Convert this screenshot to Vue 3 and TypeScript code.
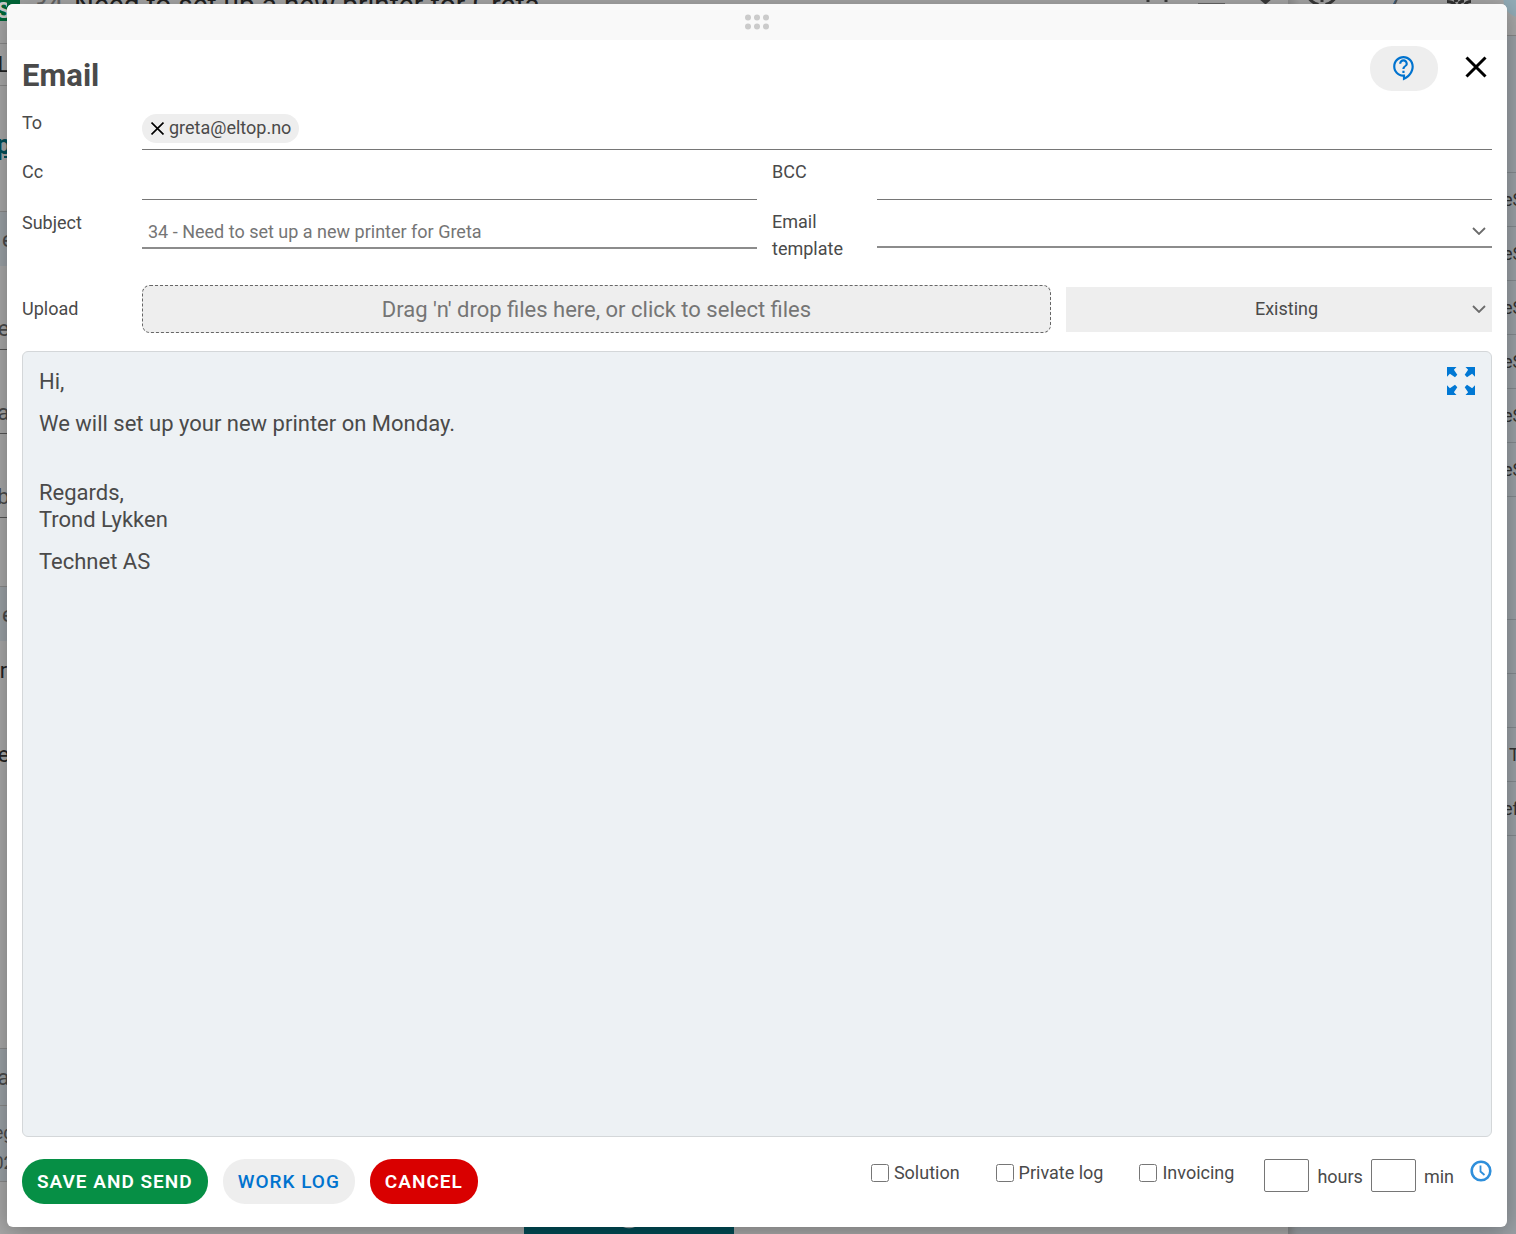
<script setup lang="ts">
import { ref } from 'vue'

interface Strip {
  h: number
  text?: string
  kind?: string
}

const to = ref('')
const recipients = ref<string[]>(['greta@eltop.no'])
const cc = ref('')
const bcc = ref('')
const subject = ref('')
const template = ref('')
const existing = ref('Existing')
const hours = ref('')
const minutes = ref('')
const flags = ref([
  { id: 'solution', label: 'Solution', on: false },
  { id: 'private', label: 'Private log', on: false },
  { id: 'invoicing', label: 'Invoicing', on: false },
])

const leftRows: Strip[] = [
  { h: 21, text: 'S', kind: 'brand' },
  { h: 23, kind: 'line' },
  { h: 42, text: 'L', kind: 'line dark' },
  { h: 34 },
  { h: 48, text: 'p', kind: 'link' },
  { h: 44, kind: 'line' },
  { h: 54, text: 'e', kind: 'tint indent' },
  { h: 84, text: 'e', kind: 'line field' },
  { h: 84, text: 'a', kind: 'line field' },
  { h: 84, text: 'b', kind: 'line field' },
  { h: 69, kind: 'line' },
  { h: 54, text: 'e', kind: 'tint indent' },
  { h: 58, text: 'r', kind: 'dark' },
  { h: 110, text: 'e', kind: 'dark' },
  { h: 240, kind: 'line' },
  { h: 57, text: 'a', kind: 'line tint' },
  { h: 15, kind: 'tint' },
  { h: 23, text: 'eg', kind: 'tint small' },
  { h: 38, text: '02', kind: 'line tint small' },
]

const rightRows: Strip[] = [
  { h: 36, kind: 'avatar-row' },
  { h: 137, kind: 'line' },
  ...Array.from({ length: 6 }, () => ({ h: 54, text: 'eS', kind: 'line' })),
  { h: 123, kind: 'line' },
  { h: 54, kind: 'line' },
  { h: 54, kind: 'line' },
  { h: 54, text: 'T', kind: 'line indent' },
  { h: 54, text: 'ef', kind: 'line' },
]

const arrow = 'M0 0H9.500L6.900 2.700 10.300 7.800 8 10.300 2.900 6.800 0 9.800z'
const corners = ['', 'translate(28 0) scale(-1 1)', 'translate(0 28) scale(1 -1)', 'translate(28 28) scale(-1 -1)']

function removeRecipient(name: string) {
  recipients.value = recipients.value.filter((r) => r !== name)
}
</script>

<template>
  <div class="page">
    <div class="behind" aria-hidden="true">
      <div class="behind-left">
        <div v-for="(r, i) in leftRows" :key="i" :class="['strip', r.kind]" :style="{ height: r.h + 'px' }">
          <span v-if="r.text">{{ r.text }}</span>
        </div>
      </div>
      <div class="behind-main">
        <div class="ticket-bar">
          <span class="brand-end"></span>
          <span class="ticket-no">34</span>
          <span class="ticket-title">Need to set up a new printer for Greta</span>
          <svg class="ticket-tools" width="130" height="4" viewBox="0 0 130 4">
            <path d="M4 0v2M22 0v2" stroke="#3a3a3a" stroke-width="3" />
            <path d="M54 3.500h27" stroke="#666" stroke-width="1" />
            <path d="M115 -3l6.500 5.500 6.500-5.500" fill="none" stroke="#3a3a3a" stroke-width="3" />
          </svg>
        </div>
        <div class="teal-block">
          <svg width="12" height="2" viewBox="0 0 12 2">
            <path d="M0 0h12q-6 2.500-12 0z" fill="#a0a8aa" />
          </svg>
        </div>
      </div>
      <div class="behind-side">
        <div class="side-bar">
          <svg width="219" height="4" viewBox="0 0 219 4">
            <path d="M21.500 -1q4 4.500 9 5.500M46.500 -1q-4 4.500-9 5.500" fill="none" stroke="#3a3a3a" stroke-width="3" />
            <path d="M34 0v2" stroke="#3a3a3a" stroke-width="3" />
            <path d="M109 -1l-2.500 5.500" stroke="#555" stroke-width="2" />
            <path d="M107.500 0l-2 4" stroke="#2f5f8a" stroke-width="1" />
            <path d="M159 1.500q5 0 8 3M171 4q1-3 5-3M183 1.500q-4 0-6 3M166 1l4-1" fill="none" stroke="#333" stroke-width="3" />
          </svg>
        </div>
      </div>
      <div class="behind-right">
        <div v-for="(r, i) in rightRows" :key="i" :class="['strip', r.kind]" :style="{ height: r.h + 'px' }">
          <span v-if="r.text">{{ r.text }}</span>
        </div>
      </div>
    </div>

    <section class="dialog" role="dialog" aria-labelledby="dialog-title">
      <div class="handle">
        <svg width="24" height="16" viewBox="0 0 24 16" fill="#cbcbcb">
          <circle v-for="n in 6" :key="n" :cx="3 + 9 * ((n - 1) % 3)" :cy="n > 3 ? 12.5 : 3.5" r="3" />
        </svg>
      </div>

      <div class="body">
        <header class="head">
          <h1 id="dialog-title">Email</h1>
          <div class="head-actions">
            <button class="help" type="button" aria-label="Help">
              <svg width="26" height="26" viewBox="0 0 24 24" fill="#0073cf">
                <path d="M11 23.590v-3.600c-5.010-.26-9-4.420-9-9.490C2 5.260 6.260 1 11.500 1S21 5.260 21 10.500c0 4.950-3.440 9.930-8.570 12.400l-1.430.69zM11.500 3C7.360 3 4 6.360 4 10.500S7.360 18 11.500 18H13v2.300c3.640-2.300 6-6.080 6-9.800C19 6.360 15.640 3 11.500 3zm-1 11.500h2v2h-2zm2-1.500h-2c0-3.250 3-3 3-5 0-1.100-.9-2-2-2s-2 .9-2 2h-2c0-2.210 1.790-4 4-4s4 1.790 4 4c0 2.500-3 2.750-3 5z" />
              </svg>
            </button>
            <button class="close" type="button" aria-label="Close">
              <svg width="22" height="22" viewBox="0 0 22 22" fill="none" stroke="#000" stroke-width="3">
                <path d="M1.500 1.500l19 19M20.500 1.500l-19 19" />
              </svg>
            </button>
          </div>
        </header>

        <div class="row row-to">
          <label for="to">To</label>
          <div class="field chips">
            <span v-for="r in recipients" :key="r" class="chip">
              <button type="button" :aria-label="'Remove ' + r" @click="removeRecipient(r)">
                <svg width="13" height="13" viewBox="0 0 12 12" fill="none" stroke="#000" stroke-width="1.500">
                  <path d="M.5.5l11 11M11.500.5l-11 11" />
                </svg>
              </button>
              <span>{{ r }}</span>
            </span>
            <input id="to" v-model="to" type="text" />
          </div>
        </div>

        <div class="row row-cc">
          <label for="cc">Cc</label>
          <input id="cc" v-model="cc" class="field" type="text" />
          <label class="second" for="bcc">BCC</label>
          <input id="bcc" v-model="bcc" class="field" type="text" />
        </div>

        <div class="row row-subject">
          <label for="subject">Subject</label>
          <input id="subject" v-model="subject" class="field" type="text" placeholder="34 - Need to set up a new printer for Greta" />
          <label class="second" for="template">Email template</label>
          <div class="select">
            <select id="template" v-model="template" class="field">
              <option value=""></option>
            </select>
            <svg class="chevron" width="14" height="8" viewBox="0 0 14 8" fill="none" stroke="#6b6b6b" stroke-width="1.800">
              <path d="M1 1l6 6 6-6" />
            </svg>
          </div>
        </div>

        <div class="row row-upload">
          <span class="label">Upload</span>
          <button class="drop" type="button">Drag 'n' drop files here, or click to select files</button>
          <div class="select existing">
            <select v-model="existing" aria-label="Existing files">
              <option>Existing</option>
            </select>
            <svg class="chevron" width="14" height="8" viewBox="0 0 14 8" fill="none" stroke="#6b6b6b" stroke-width="1.800">
              <path d="M1 1l6 6 6-6" />
            </svg>
          </div>
        </div>

        <div class="editor">
          <div class="content" contenteditable="true" role="textbox" aria-multiline="true" aria-label="Message" spellcheck="false">
            <p>Hi,</p>
            <p>We will set up your new printer on Monday.</p>
            <p><br />Regards,<br />Trond Lykken</p>
            <p>Technet AS</p>
          </div>
          <button class="expand" type="button" aria-label="Full screen">
            <svg width="28" height="28" viewBox="0 0 28 28" fill="#0078d4">
              <path v-for="c in corners" :key="c" :d="arrow" :transform="c" />
            </svg>
          </button>
        </div>

        <footer class="foot">
          <div class="actions">
            <button class="pill green" type="button">SAVE AND SEND</button>
            <button class="pill plain" type="button">WORK LOG</button>
            <button class="pill red" type="button">CANCEL</button>
          </div>
          <div class="options">
            <label v-for="f in flags" :key="f.id" class="check">
              <input v-model="f.on" type="checkbox" />
              <span>{{ f.label }}</span>
            </label>
            <div class="time">
              <input id="hours" v-model="hours" type="text" />
              <label for="hours">hours</label>
              <input id="minutes" v-model="minutes" type="text" />
              <label for="minutes">min</label>
            </div>
            <button class="clock" type="button" aria-label="Timer">
              <svg width="22" height="22" viewBox="0 0 22 22" fill="none" stroke="#2f8fdb">
                <circle cx="11" cy="11" r="9.300" stroke-width="2.600" />
                <path d="M10.500 5.500v6l4 3.500" stroke-width="1.800" />
              </svg>
            </button>
          </div>
        </footer>
      </div>
    </section>
  </div>
</template>

<style>
body {
  background: #a3a3a3;
}
</style>

<style scoped>
* {
  box-sizing: border-box;
}
.page {
  position: relative;
  display: flex;
  min-height: 100vh;
  padding: 4px 9px 7px 7px;
  overflow: hidden;
  font-family: Roboto, "Liberation Sans", sans-serif;
  font-size: 18px;
  line-height: 27px;
  color: #4a4a4a;
}
button,
input,
select {
  margin: 0;
  padding: 0;
  border: 0;
  background: none;
  font: inherit;
  color: inherit;
}
svg {
  display: block;
}

/* dimmed page under the dialog */
.behind {
  position: absolute;
  inset: 0;
  display: flex;
  overflow: hidden;
  background: #a8a8a8;
}
.behind-left {
  flex: none;
  width: 7px;
  overflow: hidden;
}
.strip {
  display: flex;
  align-items: center;
  justify-content: center;
  font-size: 22px;
  color: #4a4a4a;
}
.strip.line {
  border-bottom: 1px solid #8a8a8a;
}
.strip.tint {
  background: #9ba1a6;
}
.strip.dark {
  color: #222;
}
.strip.field {
  padding-top: 42px;
  border-color: #555;
}
.strip.small {
  font-size: 18px;
}
.strip.indent {
  justify-content: flex-start;
  padding-left: 2px;
}
.strip.brand {
  background: #00693a;
  color: #ccc;
  font-weight: 700;
}
.strip.link {
  font-size: 28px;
  color: #004f59;
  font-weight: 700;
  text-decoration: underline;
}
.behind-main {
  display: flex;
  flex: 1;
  flex-direction: column;
  justify-content: space-between;
}
.ticket-bar {
  display: flex;
  height: 24px;
  font-size: 28px;
  line-height: 10px;
  color: #222;
  white-space: nowrap;
}
.brand-end {
  width: 13px;
  background: #00693a;
}
.ticket-no {
  width: 42px;
  margin-left: 12px;
  color: #666;
}
.ticket-tools {
  margin-left: auto;
  margin-right: 14px;
}
.teal-block {
  width: 210px;
  height: 24px;
  margin-left: 517px;
  padding: 17px 0 0 99px;
  background: #004b55;
}
.behind-side {
  width: 219px;
  background: #9ba1a6;
  box-shadow: inset 9px 0 9px -6px #808080;
}
.side-bar {
  height: 36px;
}
.side-bar svg {
  background: linear-gradient(90deg, #909090, #a8a8a8 12px);
}
.behind-right {
  flex: none;
  width: 13px;
  margin-left: -4px;
  overflow: hidden;
  background: #9ba1a6;
}
.behind-right .strip {
  justify-content: flex-start;
  font-size: 18px;
  color: #333;
}
.behind-right .strip.indent {
  padding-left: 6px;
}
.behind-right .strip.line {
  border-color: #848a8e;
}
.behind-right .avatar-row {
  border-bottom: 1px solid #888;
  background: radial-gradient(circle at 18px 0, #93adb8 17px, #a8a8a8 18px);
}

/* dialog */
.dialog {
  position: relative;
  display: flex;
  flex: 1;
  flex-direction: column;
  min-width: 0;
  overflow: hidden;
  border-radius: 6px;
  background: #fff;
  box-shadow: 0 4px 24px rgba(0, 0, 0, 0.3);
}
.handle {
  display: flex;
  align-items: center;
  justify-content: center;
  height: 36px;
  background: #f9f9f9;
}
.body {
  display: flex;
  flex: 1;
  flex-direction: column;
  padding: 6px 15px 23px;
}
.head {
  display: flex;
  justify-content: space-between;
  height: 64px;
}
h1 {
  margin: 12px 0 0;
  font-size: 31px;
  line-height: 36px;
  font-weight: 700;
}
.head-actions {
  display: flex;
  align-items: flex-start;
  gap: 27px;
  padding-right: 5px;
}
.help {
  display: flex;
  align-items: center;
  justify-content: center;
  width: 68px;
  height: 45px;
  padding-bottom: 2px;
  border-radius: 22px;
  background: #eee;
}
.close {
  padding-top: 10px;
}

.row {
  display: grid;
  grid-template-columns: 120px 1fr 120px 1fr;
}
.row .second {
  padding-right: 30px;
  padding-left: 15px;
}
.field {
  width: 100%;
  min-width: 0;
  border-bottom: 1px solid #767676;
}
.row-to {
  grid-template-columns: 120px 1fr;
  height: 40px;
}
.row-to > label {
  margin-top: -1px;
}
.chips {
  display: flex;
  align-items: flex-start;
  padding-top: 4px;
}
.chips input {
  flex: 1;
  height: 29px;
}
.chip {
  display: flex;
  align-items: center;
  gap: 5px;
  height: 29px;
  padding: 0 8px 0 9px;
  border-radius: 15px;
  background: #eee;
}
.chip span {
  padding-bottom: 2px;
}
.row-cc {
  height: 50px;
}
.row-cc label {
  padding-top: 8px;
}
.row-subject {
  height: 85px;
}
.row-subject label {
  padding-top: 9px;
}
.row-subject .second {
  padding-top: 8px;
}
.row-subject .field {
  height: 49px;
  padding: 16px 6px 0;
  border-bottom: 2px solid #8c8c8c;
}
.row-subject select.field {
  height: 48px;
}
.row-subject input::placeholder {
  color: #757575;
  opacity: 1;
}
.select {
  position: relative;
  min-width: 0;
}
.select select {
  appearance: none;
  width: 100%;
}
.chevron {
  position: absolute;
  top: 27px;
  right: 6px;
  pointer-events: none;
}
.row-upload {
  grid-template-columns: 120px 101fr 49fr;
  align-items: center;
  height: 48px;
}
.row-upload .label {
  padding-bottom: 2px;
}
.drop {
  height: 48px;
  border: 1px dashed #666;
  border-radius: 8px;
  background: #eee;
  font-size: 22px;
  color: #757575;
}
.existing {
  margin-left: 15px;
}
.existing select {
  display: block;
  height: 45px;
  padding: 0 0 2px 15px;
  background: #eee;
  text-align: center;
  text-align-last: center;
}
.existing .chevron {
  top: 18px;
}

.editor {
  display: flex;
  flex: 1;
  align-items: flex-start;
  margin-top: 18px;
  padding: 15px 16px;
  border: 1px solid #d4d7d9;
  border-radius: 6px;
  background: #edf1f4;
}
.content {
  flex: 1;
  padding-top: 1px;
  font-size: 22px;
  outline: none;
}
.content p {
  margin: 0 0 15px;
}

.foot {
  display: flex;
  align-items: flex-start;
  justify-content: space-between;
  margin-top: 22px;
}
.actions {
  display: flex;
  gap: 15px;
}
.pill {
  height: 45px;
  padding: 0 15px;
  border-radius: 22px;
  font-size: 19px;
  font-weight: 600;
  letter-spacing: 1px;
}
.green {
  background: #068f45;
  color: #fff;
}
.plain {
  background: #eee;
  color: #0073cf;
  font-weight: 500;
}
.red {
  background: #d90000;
  color: #fff;
}
.options {
  display: flex;
  align-items: flex-start;
}
.check {
  display: flex;
  align-items: center;
  gap: 5px;
  margin-right: 36px;
}
.check:nth-of-type(3) {
  margin-right: 30px;
}
.check input {
  width: 18px;
  height: 18px;
}
.check span {
  padding-bottom: 1px;
}
.time {
  display: flex;
  align-items: center;
  gap: 8px;
}
.time input {
  width: 45px;
  height: 33px;
  border: 1px solid #767676;
  border-radius: 2px;
}
.time label {
  padding-top: 2px;
}
.clock {
  margin: 1px 0 0 16px;
}
</style>
